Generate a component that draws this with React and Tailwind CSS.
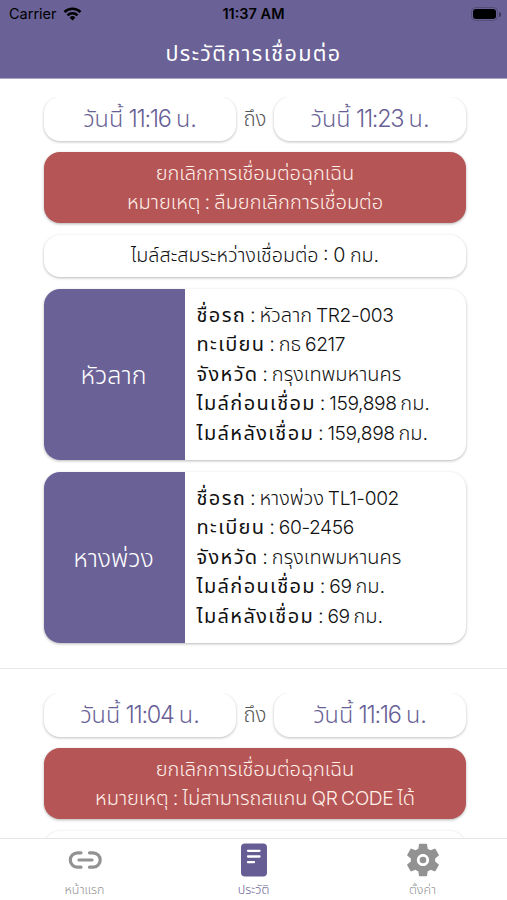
import React, { useState } from "react";
import { MdSettings } from "react-icons/md";

const histories = [
  {
    id: 1,
    start: "11:16",
    end: "11:23",
    remark: "ลืมยกเลิกการเชื่อมต่อ",
    mile: "0",
    cars: [
      {
        type: "หัวลาก",
        name: "หัวลาก TR2-003",
        plate: "กธ 6217",
        province: "กรุงเทพมหานคร",
        before: "159,898 กม.",
        after: "159,898 กม.",
      },
      {
        type: "หางพ่วง",
        name: "หางพ่วง TL1-002",
        plate: "60-2456",
        province: "กรุงเทพมหานคร",
        before: "69 กม.",
        after: "69 กม.",
      },
    ],
  },
  {
    id: 2,
    start: "11:04",
    end: "11:16",
    remark: "ไม่สามารถสแกน QR CODE ได้",
    mile: null,
    cars: [],
  },
];

// latin letters and digits sit a bit tighter than the thai text
const Mixed = ({ text }) => {
  return text.split(/([A-Z0-9][A-Z0-9,\- ]*[A-Z0-9]|[A-Z0-9])/).map((part, i) =>
    i % 2 === 1 ? (
      <span key={i} className="text-[0.96em] tracking-[-0.02em]">
        {part}
      </span>
    ) : (
      part
    )
  );
};

const StatusBar = () => {
  return (
    <div className="grid grid-cols-3 items-center h-7 px-[9px] text-black font-['Inter']">
      <div className="flex items-center gap-1.5 text-[14.5px] font-normal">
        <span>Carrier</span>
        <svg width="19" height="14" viewBox="0 0 18 14" fill="none" stroke="currentColor" strokeWidth="2.6">
          <path d="M1 5a11.3 11.3 0 0 1 16 0" />
          <path d="M4 8.300a7 7 0 0 1 10 0" />
          <path d="M9 13.500l-2.900-3a4.100 4.100 0 0 1 5.800 0z" fill="currentColor" stroke="none" />
        </svg>
      </div>
      <span className="text-center font-semibold text-[14.5px]">11:37 AM</span>
      <div className="flex items-center justify-end gap-px -mr-[3px]">
        <div className="w-[27px] h-[14px] rounded-[4.5px] border border-black/20 p-px">
          <div className="w-full h-full rounded-[3px] bg-black" />
        </div>
        <div className="w-[2px] h-[5px] rounded-r-full bg-black/40" />
      </div>
    </div>
  );
};

const TimeBox = ({ time }) => {
  return (
    <div className="flex-1 h-[44px] pt-px flex justify-center items-center rounded-2xl bg-white shadow-[0_1px_3px_rgba(0,0,0,0.26)] text-[#685f96] text-[23.5px] whitespace-pre">
      <span>วันนี้</span>
      <span className="tracking-[-1.3px]"> {time} </span>
      <span>น.</span>
    </div>
  );
};

const Row = ({ label, value }) => {
  return (
    <div className="h-[29.4px] leading-[29.4px] whitespace-nowrap [word-spacing:-1.8px]">
      <span className="font-normal tracking-[1.35px]">{label}</span>
      <span>
        {" : "}
        <Mixed text={value} />
      </span>
    </div>
  );
};

const CarCard = ({ car }) => {
  return (
    <div className="h-[171px] flex rounded-2xl overflow-hidden bg-white shadow-[0_1px_3px_rgba(0,0,0,0.28)]">
      <div className="w-[141px] pt-0.5 pr-0.5 flex justify-center items-center bg-[#6a6296] text-white text-[25px]">
        {car.type}
      </div>
      <div className="flex-1 pl-[11.5px] pt-3 text-[20px] text-[#111]">
        <Row label="ชื่อรถ" value={car.name} />
        <Row label="ทะเบียน" value={car.plate} />
        <Row label="จังหวัด" value={car.province} />
        <Row label="ไมล์ก่อนเชื่อม" value={car.before} />
        <Row label="ไมล์หลังเชื่อม" value={car.after} />
      </div>
    </div>
  );
};

const History = ({ item }) => {
  return (
    <div className="pt-6 pb-[25px] border-b border-[#e8e8e8]">
      <div className="flex flex-col gap-3 pl-11 pr-[41px]">
        {/* the top edge of the time row is clipped, only side and bottom shadows stay */}
        <div className="flex items-center h-[47px] -mb-1 -mx-1 px-1 pb-1 overflow-hidden">
          <TimeBox time={item.start} />
          <span className="w-[38px] pt-px text-center text-[20.5px] text-[#555]">ถึง</span>
          <TimeBox time={item.end} />
        </div>
        <div className="h-[71px] flex flex-col justify-center items-center rounded-2xl bg-[#b55555] shadow-[0_1px_3px_rgba(0,0,0,0.3)] text-[#fff0ea] text-[20px] leading-[29px] whitespace-nowrap [word-spacing:-1.5px]">
          <span>ยกเลิกการเชื่อมต่อฉุกเฉิน</span>
          <span>
            หมายเหตุ : <Mixed text={item.remark} />
          </span>
        </div>
        <div className="h-[42px] flex justify-center items-center rounded-2xl bg-white shadow-[0_1px_3px_rgba(0,0,0,0.28)] text-[#111] text-[19.7px] whitespace-nowrap [word-spacing:-1px]">
          {item.mile !== null && `ไมล์สะสมระหว่างเชื่อมต่อ : ${item.mile} กม.`}
        </div>
        {item.cars.map((car) => (
          <CarCard key={car.type} car={car} />
        ))}
      </div>
    </div>
  );
};

const LinkIcon = () => (
  <svg width="34" height="34" viewBox="0 0 34 34" fill="none" stroke="currentColor" strokeWidth="3.2" strokeLinecap="round">
    <path d="M13 9.800H9.500a7.200 7.200 0 0 0 0 14.400H13M21.500 9.800H25a7.200 7.200 0 0 1 0 14.400H21.500M11 17h13" />
  </svg>
);

const NoteIcon = () => (
  <svg width="34" height="34" viewBox="0 0 34 34">
    <rect x="4" y="0.500" width="26" height="33" rx="4" fill="currentColor" />
    <path d="M11 7.800H22.500M11 13.500H22.500M11 19.200h6" stroke="white" strokeWidth="2.300" strokeLinecap="round" />
  </svg>
);

const GearIcon = () => (
  <svg width="34" height="34" viewBox="0 0 34 34" overflow="visible">
    <MdSettings x="-3.400" y="-3.400" size="40.800" />
    <circle cx="17" cy="17" r="3.300" fill="currentColor" />
  </svg>
);

const tabs = [
  { key: "home", label: "หน้าแรก", Icon: LinkIcon },
  { key: "history", label: "ประวัติ", Icon: NoteIcon },
  { key: "setting", label: "ตั้งค่า", Icon: GearIcon },
];

const App = () => {
  const [active, setActive] = useState("history");

  return (
    <div className="w-full h-[900px] flex flex-col overflow-hidden bg-white font-['Inter','Noto_Sans_Thai','Noto_Sans',sans-serif] font-light">
      <div className="h-[79px] shrink-0 bg-[#6a6296] border-b border-[#aaa4cc]">
        <StatusBar />
        <div className="h-[50px] flex justify-center items-center text-white text-[21.5px] font-normal tracking-[1.4px]">
          ประวัติการเชื่อมต่อ
        </div>
      </div>
      <div className="flex-1 min-h-0 overflow-hidden">
        <div className="-mt-1.5">
          {histories.map((item) => (
            <History key={item.id} item={item} />
          ))}
        </div>
      </div>
      <div className="h-[62px] shrink-0 flex border-t border-[#e6e6e6] bg-white">
        {tabs.map(({ key, label, Icon }) => (
          <button
            key={key}
            onClick={() => setActive(key)}
            className={`flex-1 flex flex-col items-center pt-1 ${
              active === key ? "text-[#665d95]" : "text-[#929292]"
            }`}
          >
            <Icon />
            <span className="mt-1 text-[12.5px] leading-[18px]">{label}</span>
          </button>
        ))}
      </div>
    </div>
  );
};

export default App;
